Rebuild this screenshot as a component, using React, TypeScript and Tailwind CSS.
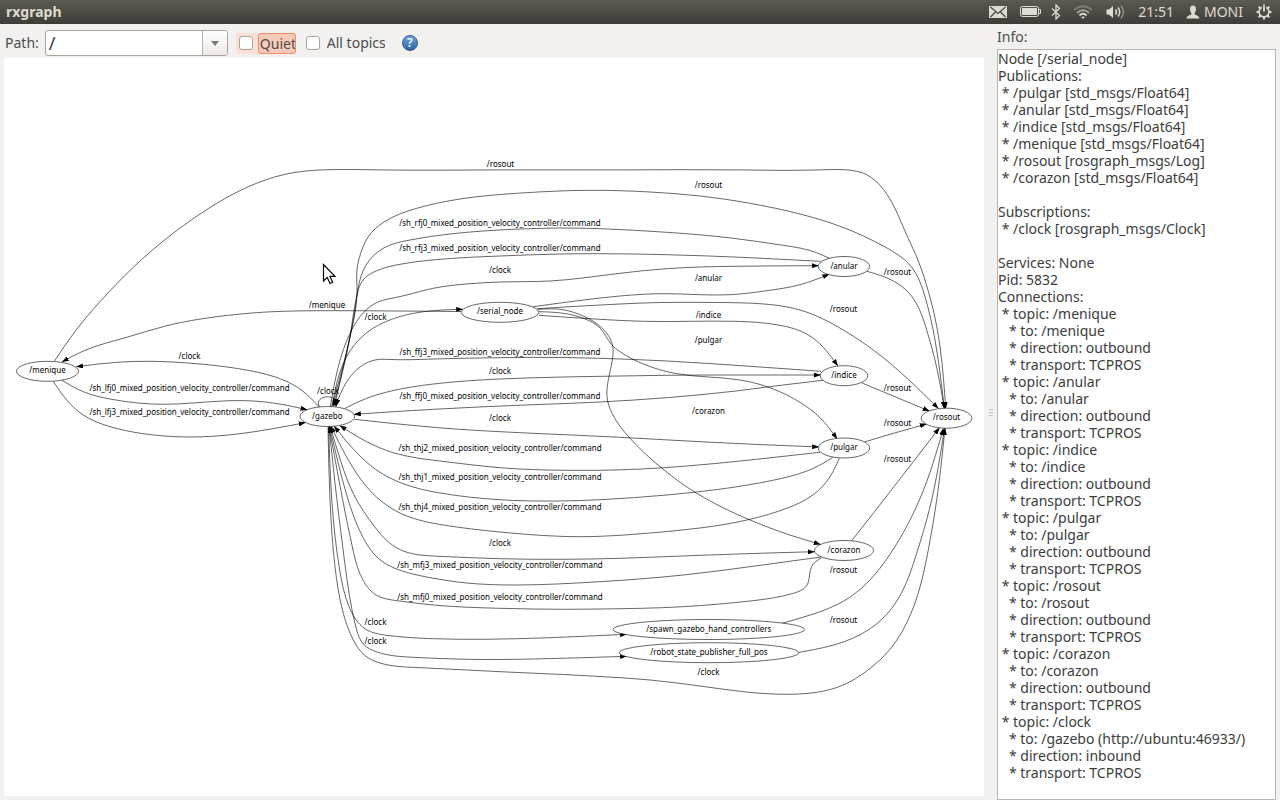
import { useState } from 'react'

type Point = [number, number]

const nodes = [
  { name: '/menique', x: 47.5, y: 371.3, rx: 31 },
  { name: '/gazebo', x: 327.3, y: 416.5, rx: 27.3 },
  { name: '/serial_node', x: 500, y: 312.3, rx: 38.7 },
  { name: '/anular', x: 844, y: 266.5, rx: 25.7 },
  { name: '/indice', x: 844, y: 375.7, rx: 23.7 },
  { name: '/pulgar', x: 844, y: 448, rx: 25.7 },
  { name: '/corazon', x: 844, y: 550.5, rx: 29.5 },
  { name: '/rosout', x: 946.5, y: 418.2, rx: 25.3 },
  { name: '/spawn_gazebo_hand_controllers', x: 708.8, y: 629.5, rx: 95.8 },
  { name: '/robot_state_publisher_full_pos', x: 709, y: 652.7, rx: 89.7 },
]

// Each edge runs from publisher to subscriber through the listed points.
const edges: Point[][] = [
  // menique
  [[54.3, 361.3], [75, 331.5], [100, 301.7], [133.3, 267.3], [166.7, 238.3], [200, 214], [233.3, 194], [266.7, 179.5], [293.3, 172.7], [322, 169.9], [380, 169.9], [500, 169.9], [620, 169.9], [740, 169.9], [820, 169.9], [848, 170], [866.7, 174.7], [883.3, 189.3], [896.7, 212], [906.7, 235], [916.7, 257], [925, 280], [933.3, 310], [940, 346.7], [945.7, 408.3]],
  [[62, 380.3], [83.3, 391.7], [110, 399], [163.3, 404.3], [230, 400.7], [273.3, 403], [307, 409.7]],
  [[53.3, 381.3], [66.7, 400], [83.3, 415], [110, 426.7], [143.3, 433.7], [188.3, 437], [240, 433.7], [305.3, 422.7]],
  // serial_node
  [[461.3, 311.5], [400, 311], [320, 310.7], [266.7, 312], [216.7, 316.7], [166.7, 325.7], [126.7, 337.3], [83.3, 351], [62.3, 361.7]],
  [[533.3, 306.7], [583.3, 300], [620, 296], [666.7, 293.7], [730, 294.7], [766.7, 290.7], [800, 284.7], [829, 274.3]],
  [[537.3, 308.7], [620, 304], [660, 302.5], [716.7, 302.5], [760, 303.7], [800, 310], [843.3, 330], [883.3, 357.7], [916.7, 387.3], [938.3, 408.3]],
  [[538.7, 315.3], [600, 319.3], [643.3, 321.3], [690, 321.3], [733.3, 321.3], [780, 325.3], [806.7, 334], [823.3, 347.3], [837.7, 365.7]],
  [[538.7, 311.7], [563.3, 313.3], [583.3, 318.3], [600, 328], [611.5, 344.5], [620, 351.7], [643.3, 364], [676.7, 373.7], [740, 380], [773.3, 389], [800, 402.3], [820, 417.7], [837, 438.7]],
  [[537.7, 309.3], [560, 309.3], [583.3, 316], [602, 328], [612.7, 346], [612, 362], [608.3, 380], [607, 396.7], [612, 413.3], [630, 438.3], [660, 466.7], [696.7, 493.3], [750, 520], [786.7, 534], [820.3, 544.3]],
  // gazebo
  [[319, 406.7], [302, 390.5], [283.3, 380], [250, 370.7], [200, 364], [150, 361.3], [116.7, 362.3], [76.5, 366.7]],
  [[319, 407], [319, 400.7], [325, 397], [331.7, 397.5], [336, 400.7], [336, 406.5]],
  [[331.7, 406.7], [344, 362], [353, 323], [357, 293], [357, 270], [360.7, 253.3], [368.3, 236.7], [384, 222], [416.7, 208.3], [460, 199], [516.7, 193.3], [566.7, 190.7], [620, 190.7], [650, 192], [700, 196], [750, 203.3], [800, 214], [843.3, 227.5], [883.3, 246], [911.5, 267], [925, 296.7], [935, 340], [944.3, 408.3]],
  [[330.3, 406.7], [338.3, 366.7], [350, 333.3], [365, 311], [378, 302], [396.7, 297.3], [433.3, 288.3], [466.7, 284], [500, 282], [550, 281], [583.3, 277.9], [620, 273.3], [666.7, 268.7], [733.3, 266.3], [818.3, 265.7]],
  [[332, 406.7], [340, 372], [350, 351], [366.7, 332.7], [393.3, 318.7], [423.3, 311.7], [462.7, 309.3]],
  [[345, 408.3], [366.7, 398.3], [390, 391.3], [433.3, 384], [500, 379], [620, 376], [666.7, 375.3], [740, 375], [820.3, 375]],
  [[354.3, 419.3], [433.3, 427.3], [533, 433.3], [620, 437.3], [700, 441.7], [818.7, 447]],
  [[330.3, 426.7], [341, 462], [355, 497], [373.3, 525], [389, 542.5], [405, 551.7], [433.3, 556], [500, 558.7], [620, 558.3], [700, 555.3], [814.3, 551.7]],
  [[328.7, 426.7], [332, 503.3], [339.7, 570], [349.7, 608.3], [358, 622.3], [367, 630], [386.7, 635.3], [433.3, 638.7], [483.3, 639.3], [550, 637.7], [626.7, 634.3]],
  [[329, 426.7], [335, 483.3], [342.7, 546.7], [351.7, 608.3], [356.7, 630], [363.3, 644], [377, 652], [413.3, 657.3], [466.7, 659.3], [533.3, 659], [626.7, 656.3]],
  [[328, 426.7], [330, 500], [335, 566.7], [343.3, 613.3], [353.3, 640], [365.5, 656], [380, 663], [416.7, 667.5], [500, 671.7], [566.7, 674.7], [620, 677.7], [650, 680], [700, 686], [743.3, 691.7], [786.7, 694.3], [816.7, 692.3], [843.3, 685], [866.7, 671], [890, 649.3], [911, 613.3], [920, 587], [928.3, 550], [936.7, 500], [941.7, 460], [945, 428.3]],
  // anular
  [[830, 258.7], [816.7, 252.7], [783.3, 245.3], [733.3, 238.3], [666.7, 232.3], [600, 228.7], [560, 228], [513, 229.3], [450, 234], [410, 240], [382, 249], [366.7, 264], [358.3, 287], [355, 310], [346.7, 352], [334.7, 405.5]],
  [[820.7, 261.3], [750, 257.7], [666.7, 254.7], [600, 253.7], [560, 254], [500, 256], [440, 259.3], [400, 264.3], [376.7, 270.7], [363, 280], [357, 295], [350, 336.7], [333.3, 406]],
  [[867, 271.3], [890, 279.3], [906, 290], [916.7, 304], [926.7, 330], [935, 360], [944.3, 408.3]],
  // indice
  [[821, 371.3], [750, 366.3], [666.7, 361], [600, 358.3], [566.7, 357.5], [500, 357.7], [433.3, 359], [390, 359.5], [376, 359.8], [361, 366.3], [346.7, 381.7], [335.7, 405.5]],
  [[822.7, 380.3], [783.3, 385], [733.3, 391.3], [666.7, 397.7], [600, 402], [533.3, 404.7], [433.3, 409.3], [354.3, 414.3]],
  [[862, 383], [929.3, 411]],
  // pulgar
  [[820, 452.3], [750, 460], [683.3, 466.3], [600, 470.3], [566.7, 470.3], [500, 467.7], [440, 461], [393.3, 452.7], [366.7, 441.7], [340, 425.7]],
  [[832.3, 457.7], [813.3, 468.3], [783.3, 478], [733.3, 487.3], [666.7, 495], [600, 499.7], [560, 501], [500, 499.7], [440, 493], [402, 483.3], [378, 471], [356.7, 452.7], [334.3, 426.3]],
  [[839.3, 458.3], [830, 476.7], [813.3, 494.7], [786.7, 508.3], [750, 519.3], [700, 528], [650, 533], [600, 536.3], [560, 536.3], [500, 532], [443.3, 525], [402, 514], [376.7, 497.3], [353.3, 468.3], [331, 426.3]],
  [[864.3, 442], [890, 434.3], [926.3, 424]],
  // corazon
  [[821, 557], [750, 566.7], [683.3, 575], [600, 581.7], [516.7, 585], [466.7, 583], [426.7, 577], [396.7, 569], [379, 559], [363.3, 538], [346.7, 495], [329.7, 426.7]],
  [[821.3, 558], [812.5, 565], [809.3, 577], [806.5, 586], [793.3, 593.3], [750, 601], [683.3, 606.7], [600, 609], [566.7, 609.3], [500, 608.3], [433.3, 605], [397, 600.7], [376, 595], [363.3, 580.7], [353.3, 551.3], [341.7, 494.7], [329, 426.7]],
  [[851.7, 540.7], [873.3, 513.3], [913.3, 461.7], [939.3, 428]],
  // spawn_gazebo_hand_controllers
  [[782, 623.3], [813.3, 614], [843.3, 601.3], [868, 582], [890, 554.3], [910, 520], [926.7, 481.7], [943.3, 428.7]],
  // robot_state_publisher_full_pos
  [[799, 652.3], [830, 646], [860, 634.7], [880, 621], [892, 608], [902, 592], [916.7, 553.3], [930, 507], [938.3, 466.7], [944.5, 428.7]],
]

const controller = (joint: string) =>
  `/sh_${joint}_mixed_position_velocity_controller/command`

const labels: [string, number, number][] = [
  ['/rosout', 500.5, 167],
  ['/rosout', 708.5, 188],
  [controller('rfj0'), 500, 226],
  [controller('rfj3'), 500, 251],
  ['/clock', 500, 273],
  ['/anular', 708.5, 281],
  ['/indice', 708.5, 318],
  ['/pulgar', 708.5, 343],
  ['/rosout', 843.5, 312],
  ['/rosout', 897.5, 275],
  ['/menique', 327, 308],
  ['/clock', 375.5, 320],
  ['/clock', 189.5, 359],
  [controller('lfj0'), 189.5, 391],
  [controller('lfj3'), 189.5, 415],
  ['/clock', 328, 394],
  [controller('ffj3'), 500, 355],
  ['/clock', 500, 374],
  [controller('ffj0'), 500, 399],
  ['/clock', 500, 421],
  ['/rosout', 897.5, 391],
  ['/rosout', 897.5, 426],
  ['/rosout', 897.5, 462],
  ['/corazon', 708.5, 414],
  [controller('thj2'), 500, 451],
  [controller('thj1'), 500, 480],
  [controller('thj4'), 500, 510],
  ['/clock', 500, 546],
  [controller('mfj3'), 500, 568],
  [controller('mfj0'), 500, 600],
  ['/clock', 375.5, 625],
  ['/clock', 375.5, 644],
  ['/rosout', 843.5, 573],
  ['/rosout', 843.5, 623],
  ['/clock', 708.5, 675],
]

const outbound = ['menique', 'anular', 'indice', 'pulgar', 'rosout', 'corazon']

const info = [
  'Node [/serial_node]',
  'Publications:',
  ' * /pulgar [std_msgs/Float64]',
  ' * /anular [std_msgs/Float64]',
  ' * /indice [std_msgs/Float64]',
  ' * /menique [std_msgs/Float64]',
  ' * /rosout [rosgraph_msgs/Log]',
  ' * /corazon [std_msgs/Float64]',
  '',
  'Subscriptions:',
  ' * /clock [rosgraph_msgs/Clock]',
  '',
  'Services: None',
  'Pid: 5832',
  'Connections:',
  ...outbound.flatMap((name) => [
    ` * topic: /${name}`,
    `   * to: /${name}`,
    '   * direction: outbound',
    '   * transport: TCPROS',
  ]),
  ' * topic: /clock',
  '   * to: /gazebo (http://ubuntu:46933/)',
  '   * direction: inbound',
  '   * transport: TCPROS',
].join('\n')

// Slopes of the natural cubic spline through values v with spacings h.
function splineSlopes(v: number[], h: number[]) {
  const last = v.length - 1
  const delta = h.map((step, i) => (v[i + 1] - v[i]) / step)
  const m = v.map((_, i) => delta[Math.min(i, last - 1)])
  for (let pass = 0; pass < 40; pass++) {
    m[0] = (3 * delta[0] - m[1]) / 2
    for (let i = 1; i < last; i++) {
      const [a, b] = [h[i - 1], h[i]]
      m[i] =
        (3 * (b * delta[i - 1] + a * delta[i]) - b * m[i - 1] - a * m[i + 1]) /
        (2 * (a + b))
    }
    m[last] = (3 * delta[last - 1] - m[last - 1]) / 2
  }
  return m
}

function curve(points: Point[]) {
  const h = points
    .slice(1)
    .map((p, i) => Math.hypot(p[0] - points[i][0], p[1] - points[i][1]))
  const mx = splineSlopes(points.map((p) => p[0]), h)
  const my = splineSlopes(points.map((p) => p[1]), h)
  let d = `M${points[0].join(',')}`
  h.forEach((step, i) => {
    const [a, b] = [points[i], points[i + 1]]
    const t = step / 3
    d += 'C'
    d += [
      a[0] + mx[i] * t,
      a[1] + my[i] * t,
      b[0] - mx[i + 1] * t,
      b[1] - my[i + 1] * t,
      ...b,
    ]
      .map((n) => n.toFixed(1))
      .join(',')
  })
  return d
}

function Graph() {
  return (
    <svg
      viewBox="4 58 980 738"
      role="img"
      aria-label="Node graph"
      className="min-h-0 w-full flex-1 bg-white"
    >
      <defs>
        <marker
          id="arrow"
          markerUnits="userSpaceOnUse"
          markerWidth="7"
          markerHeight="5"
          refX="6.5"
          refY="2.5"
          orient="auto"
        >
          <path d="M0 0L7 2.5L0 5Z" />
        </marker>
      </defs>
      <g fill="none" stroke="#000" strokeWidth="0.6">
        {edges.map((points, i) => (
          <path key={i} d={curve(points)} markerEnd="url(#arrow)" />
        ))}
        {nodes.map((node) => (
          <ellipse key={node.name} cx={node.x} cy={node.y} rx={node.rx} ry="10" fill="#fff" />
        ))}
      </g>
      <g textAnchor="middle" className="font-['Noto_Sans','DejaVu_Sans',sans-serif] text-[8px]">
        {nodes.map((node) => (
          <text key={node.name} x={node.x} y={Math.round(node.y + 2)}>
            {node.name}
          </text>
        ))}
        {labels.map(([text, x, y], i) => (
          <text key={i} x={x} y={y}>
            {text}
          </text>
        ))}
      </g>
      <path
        d="M323.5 264.5V281L327.3 277.4L330 283.5L332.6 282.3L330 276.4H335Z"
        fill="#fff"
        stroke="#000"
        strokeWidth="1.2"
      />
    </svg>
  )
}

function MenuBar() {
  return (
    <header className="flex h-6 items-center justify-between bg-linear-to-b from-[#5c5b51] to-[#3d3c38] pr-2 pl-1.5 text-sm text-[#dfdbd2]">
      <h1 className="font-bold">rxgraph</h1>
      <div className="flex items-center">
        <svg viewBox="0 0 18 12" className="h-3 w-[18px]" aria-label="Messages">
          <rect width="18" height="12" rx="0.5" fill="#dfdbd2" />
          <path d="M1.5 1L9 7.5L16.5 1M1.5 11L6.5 6M16.5 11L11.5 6" fill="none" stroke="#45443f" strokeWidth="1.2" />
        </svg>
        <svg viewBox="0 0 21 12" className="ml-[13px] h-3 w-[21px]" aria-label="Battery">
          <rect x="0.5" y="0.5" width="18" height="10" rx="2" fill="none" stroke="#dfdbd2" />
          <rect x="2" y="2" width="15" height="7" fill="#dfdbd2" />
          <path d="M19 3.5h1.5v4H19" fill="none" stroke="#dfdbd2" />
        </svg>
        <svg viewBox="0 0 10 16" className="ml-2.5 h-4 w-2.5" aria-label="Bluetooth">
          <path d="M1 4.5L8.5 11.5L5 15V1L8.5 4.5L1 11.5" fill="none" stroke="#dfdbd2" strokeWidth="1.3" />
        </svg>
        <svg viewBox="0 0 20 14" className="ml-3 h-3.5 w-5" aria-label="Wireless" fill="none" strokeWidth="1.8">
          <path d="M1 5Q10 -2.5 19 5" stroke="#7d7b73" />
          <path d="M4 8Q10 2.5 16 8" stroke="#a5a29a" />
          <path d="M6.5 10.5Q10 7 13.5 10.5" stroke="#dfdbd2" />
          <path d="M8.2 12L10 14L11.8 12Q10 10.8 8.2 12Z" fill="#dfdbd2" />
        </svg>
        <svg viewBox="0 0 20 16" className="ml-[13px] h-4 w-5" aria-label="Volume" fill="none" strokeWidth="1.5">
          <path d="M0.5 5.5H3L7 2V14L3 10.5H0.5Z" fill="#dfdbd2" />
          <path d="M9.5 5.5Q11.5 8 9.5 10.5M12 3.5Q15.5 8 12 12.5" stroke="#dfdbd2" />
          <path d="M15 1.5Q20 8 15 14.5" stroke="#8f8d85" />
        </svg>
        <time className="ml-3">21:51</time>
        <svg viewBox="0 0 14 14" className="ml-3 h-3.5 w-3.5" aria-hidden="true">
          <path d="M7 0.5C9 0.5 10 2 10 4C10 6 9.2 7 8.7 8V9.5C10 10.2 13 10.5 13.5 13.5H0.5C1 10.5 4 10.2 5.3 9.5V8C4.8 7 4 6 4 4C4 2 5 0.5 7 0.5Z" fill="#dfdbd2" />
        </svg>
        <span className="ml-1">MONI</span>
        <svg viewBox="0 0 16 16" className="ml-[13px] h-4 w-4" aria-label="System" fill="none" stroke="#dfdbd2">
          <path d="M5.8 3.4A5 5 0 1 0 10.2 3.4" strokeWidth="1.6" />
          <path d="M8 0.5V7.5" strokeWidth="1.8" />
          <path d="M0.5 8H3M13 8H15.5M8 13V15.5M2.7 2.7L4.3 4.3M13.3 2.7L11.7 4.3M2.7 13.3L4.3 11.7M13.3 13.3L11.7 11.7" strokeWidth="2" />
        </svg>
      </div>
    </header>
  )
}

function Toolbar() {
  const [path, setPath] = useState('/')

  return (
    <div className="flex h-[34px] items-center pt-1 pl-px">
      <label htmlFor="path" className="mr-1.5">
        Path:
      </label>
      <div className="flex h-[26px] w-[183px] rounded-[3px] border border-[#a9a49c] bg-white">
        <input
          id="path"
          value={path}
          onChange={(e) => setPath(e.target.value)}
          className="min-w-0 flex-1 px-[3px] text-lg leading-6 text-[#3c3c3c] outline-none"
        />
        <button
          type="button"
          aria-label="Show paths"
          className="flex w-[25px] items-center justify-center rounded-r-[2px] border-l border-[#b6b1aa] bg-linear-to-b from-white to-[#ebe9e7]"
        >
          <svg viewBox="0 0 8 5" className="h-[5px] w-2">
            <path d="M0 0H8L4 5Z" fill="#7b7974" />
          </svg>
        </button>
      </div>
      <label className="ml-2 flex items-center bg-[#fbe0d6]">
        <input
          type="checkbox"
          className="mx-[3px] h-3.5 w-3.5 appearance-none rounded-[3px] border border-[#a9a49c] bg-white checked:bg-[#f0774a]"
        />
        <span className="ml-0.5 h-[21px] w-[38px] overflow-hidden rounded-[3px] border border-[#f28d68] bg-[#f9cab8] pl-px leading-[19px] whitespace-nowrap">
          Quiet
        </span>
      </label>
      <label className="ml-2.5 flex items-center">
        <input
          type="checkbox"
          className="h-3.5 w-3.5 appearance-none rounded-[3px] border border-[#a9a49c] bg-white checked:bg-[#f0774a]"
        />
        <span className="ml-[7px] w-[58px] overflow-hidden whitespace-nowrap">All topics</span>
      </label>
      <button
        type="button"
        aria-label="Help"
        className="ml-[17px] h-4 w-4 rounded-full border border-[#2b5a93] bg-linear-to-b from-[#6ea3da] to-[#2e66a8] text-xs leading-[14px] font-semibold text-white"
      >
        ?
      </button>
    </div>
  )
}

export default function App() {
  return (
    <div className="flex h-screen flex-col bg-[#f2f1f0] font-['Noto_Sans','Open_Sans',sans-serif] text-sm text-[#4c4c4c]">
      <MenuBar />
      <div className="flex min-h-0 flex-1 pr-1 pl-1">
        <main className="flex min-w-0 flex-1 flex-col pb-1">
          <Toolbar />
          <Graph />
        </main>
        <div className="flex w-[13px] flex-col items-center justify-center gap-0.5" aria-hidden="true">
          <i className="h-px w-1 bg-[#c8c5c0]" />
          <i className="h-px w-1 bg-[#c8c5c0]" />
          <i className="h-px w-1 bg-[#c8c5c0]" />
        </div>
        <aside className="flex w-[279px] shrink-0 flex-col">
          <label htmlFor="info" className="h-[25px] leading-[26px]">
            Info:
          </label>
          <textarea
            id="info"
            readOnly
            value={info}
            className="min-h-0 flex-1 resize-none overflow-hidden border border-[#bab5ae] bg-white leading-[17px] whitespace-pre text-[#3c3c3c] outline-none"
          />
        </aside>
      </div>
    </div>
  )
}
